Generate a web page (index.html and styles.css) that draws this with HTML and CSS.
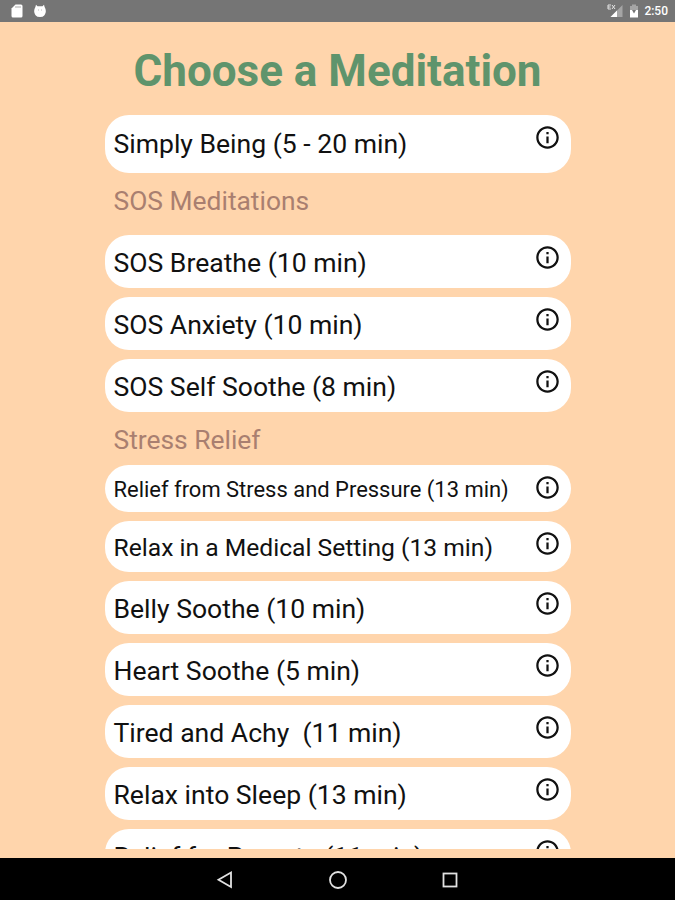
FILE: index.html
```
<!DOCTYPE html>
<html lang="en">
<head>
    <meta charset="UTF-8">
    <meta name="viewport" content="width=device-width, initial-scale=1.0">
    <title>Choose a Meditation</title>
    <link rel="stylesheet" href="styles.css">
</head>
<body>
    <svg class="defs" width="0" height="0">
        <symbol id="info" viewBox="0 0 24 24">
            <path d="M11 7h2v2h-2zm0 4h2v6h-2zm1-9C6.48 2 2 6.48 2 12s4.48 10 10 10 10-4.48 10-10S17.52 2 12 2zm0 18c-4.41 0-8-3.59-8-8s3.59-8 8-8 8 3.59 8 8-3.59 8-8 8z"/>
        </symbol>
    </svg>

    <div class="status-bar">
        <div class="status-left">
            <svg width="12" height="14" viewBox="0 0 12 14"><path d="M4.5 0.5H10a1.5 1.5 0 0 1 1.500 1.500V12a1.500 1.500 0 0 1-1.500 1.500H2A1.500 1.500 0 0 1 .5 12V4.500z" fill="#fff"/><path d="M5 2v2M7 2v2M9 2v2" stroke="#aaa"/></svg>
            <svg width="12" height="14" viewBox="0 0 12 14"><path d="M2 .8l1.500 1.400h5L10 .8l.6 2.200C12.300 5.500 12.300 9 10.200 11.500Q9 13 6 13T1.800 11.500C-.3 9-.3 5.500 1.400 3z" fill="#fff"/><path d="M4.500 5v2M7.500 5v2" stroke="#ddd"/></svg>
        </div>
        <div class="status-right">
            <svg width="17" height="14" viewBox="0 0 17 14"><path d="M15.500 1v12H3.500z" fill="#a5a5a5"/><path d="M10 6.500V13H3.500z" fill="#fff"/><path d="M4 1H1v4h3M1 3h2.500M5 1l3 4M8 1L5 5" fill="none" stroke="#e4e4e4"/></svg>
            <svg class="battery" width="10" height="14" viewBox="0 0 10 14"><path d="M3 .5h4V2h2v5H1V2h2z" fill="#a5a5a5"/><path d="M1 6h8v7.500H1z" fill="#fff"/><path d="M3 6h4L5 9.500z" fill="#757575"/></svg>
            <span class="clock">2:50</span>
        </div>
    </div>

    <div class="screen">
        <h1>Choose a Meditation</h1>
        <div class="list">
            <div class="card card-tall"><span>Simply Being (5 - 20 min)</span><svg class="info"><use href="#info"/></svg></div>

            <h2 class="sos">SOS Meditations</h2>
            <div class="card"><span>SOS Breathe (10 min)</span><svg class="info"><use href="#info"/></svg></div>
            <div class="card"><span>SOS Anxiety (10 min)</span><svg class="info"><use href="#info"/></svg></div>
            <div class="card"><span>SOS Self Soothe (8 min)</span><svg class="info"><use href="#info"/></svg></div>

            <h2>Stress Relief</h2>
            <div class="card card-small"><span>Relief from Stress and Pressure (13 min)</span><svg class="info"><use href="#info"/></svg></div>
            <div class="card card-medium"><span>Relax in a Medical Setting (13 min)</span><svg class="info"><use href="#info"/></svg></div>
            <div class="card"><span>Belly Soothe (10 min)</span><svg class="info"><use href="#info"/></svg></div>
            <div class="card"><span>Heart Soothe (5 min)</span><svg class="info"><use href="#info"/></svg></div>
            <div class="card"><span>Tired and Achy&nbsp; (11 min)</span><svg class="info"><use href="#info"/></svg></div>
            <div class="card"><span>Relax into Sleep (13 min)</span><svg class="info"><use href="#info"/></svg></div>
            <div class="card"><span>Relief for Parents (11 min)</span><svg class="info"><use href="#info"/></svg></div>
        </div>
    </div>

    <div class="nav-bar">
        <svg width="20" height="20" viewBox="0 0 20 20"><path d="M16 2.500v14.500L3.500 9.800z"/></svg>
        <svg width="20" height="20" viewBox="0 0 20 20"><circle cx="10" cy="10" r="8"/></svg>
        <svg width="20" height="20" viewBox="0 0 20 20"><rect x="3.500" y="3.500" width="13" height="13"/></svg>
    </div>
</body>
</html>
```
FILE: styles.css
```
body {
    font-family: Roboto, sans-serif;
    background: #ffd5ac;
    display: flex;
    flex-direction: column;
    height: 900px;
    margin: 0;
    overflow: hidden;
}

.defs {
    display: none;
}

.status-bar {
    display: flex;
    justify-content: space-between;
    align-items: center;
    flex: none;
    height: 22px;
    padding: 0 7px 0 11px;
    box-sizing: border-box;
    background: #757575;
    color: #fff;
}

.status-left {
    display: flex;
    gap: 11px;
}

.status-right {
    display: flex;
    align-items: center;
}

.battery {
    margin: 0 5px 0 5px;
}

.clock {
    font-size: 12px;
    font-weight: 500;
    line-height: 24px;
}

.screen {
    display: flex;
    flex-direction: column;
    flex: 1;
    min-height: 0;
    padding-bottom: 9px;
}

h1 {
    flex: none;
    margin: 0;
    height: 93px;
    line-height: 98px;
    font-size: 44px;
    font-weight: 700;
    text-align: center;
    color: #5f946c;
}

.list {
    flex: 1;
    min-height: 0;
    width: 466px;
    margin: 0 auto;
    overflow: hidden;
}

.card {
    display: flex;
    justify-content: space-between;
    align-items: center;
    height: 53px;
    margin-bottom: 9px;
    padding: 2px 10px 0 9px;
    box-sizing: border-box;
    border-radius: 24px;
    background: #fff;
    color: #111;
    font-size: 26.55px;
    white-space: nowrap;
}

.card-tall {
    height: 57.5px;
    margin-bottom: 0;
    padding-top: 0;
}

.card-medium {
    height: 51px;
    font-size: 24.65px;
}

.card-small {
    height: 47px;
    font-size: 21.95px;
}

.info {
    align-self: flex-start;
    width: 27px;
    height: 27px;
    margin-top: 7px;
    fill: #111;
}

.card-tall .info {
    margin-top: 9px;
}

h2 {
    margin: -9px 0 0;
    padding-left: 9px;
    height: 53px;
    line-height: 56px;
    font-size: 26.4px;
    font-weight: 400;
    color: #a97f70;
}

h2.sos {
    margin: 0;
    height: 62.5px;
}

.nav-bar {
    display: flex;
    justify-content: center;
    align-items: center;
    gap: 92.5px;
    flex: none;
    height: 42px;
    padding-top: 1px;
    box-sizing: border-box;
    background: #000;
}

.nav-bar svg {
    fill: none;
    stroke: #e2e2e2;
    stroke-width: 1.8;
}
```
